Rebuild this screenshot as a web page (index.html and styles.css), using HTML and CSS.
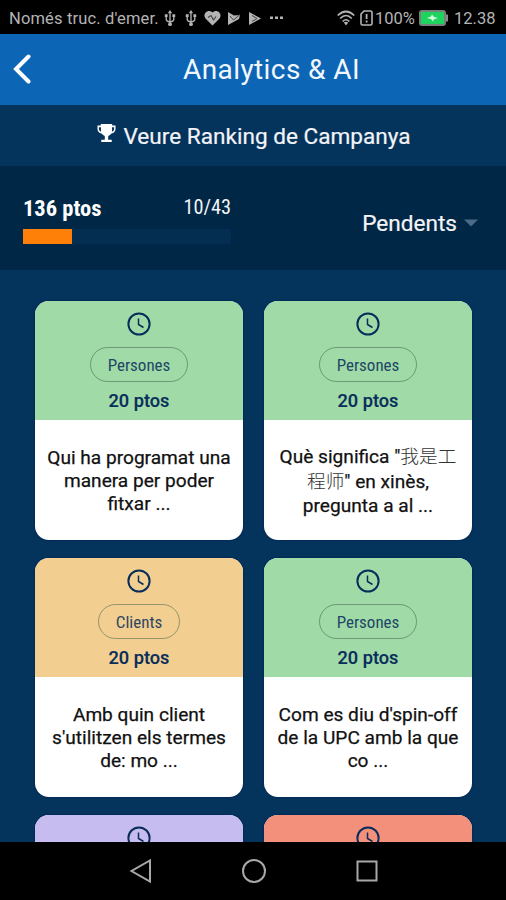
FILE: index.html
```html
<!DOCTYPE html>
<html lang="ca">
<head>
<meta charset="utf-8">
<title>Analytics &amp; AI</title>
<link rel="stylesheet" href="styles.css">
</head>
<body>
<svg class="defs" width="0" height="0">
  <symbol id="usb" viewBox="0 0 12 18"><path d="M6 2v13M2 6v4q0 2 4 2.500q4-.5 4-2.500V6" fill="none" stroke="currentColor" stroke-width="1.400"/><path d="M6 0l2.300 3.500H3.700z"/><circle cx="6" cy="15" r="2"/><path d="M.5 4.500h3v3h-3zM8.500 4.500h3v3h-3z"/></symbol>
  <symbol id="clock" viewBox="0 0 24 24"><circle cx="12" cy="12" r="10.600" fill="none" stroke="currentColor" stroke-width="2"/><path d="M11.500 6.500v6l5 3" fill="none" stroke="currentColor" stroke-width="1.500"/></symbol>
</svg>
<div class="screen">
  <header class="status">
    <span class="carrier">Només truc. d'emer.</span>
    <div class="notices">
      <svg width="12" height="17"><use href="#usb"/></svg>
      <svg width="12" height="17"><use href="#usb"/></svg>
      <svg width="17" height="16" viewBox="0 0 17 16"><path d="M8.500 15.500L1.500 8.500C-2 4 4-2 8.500 2.500C13-2 19 4 15.500 8.500z"/><path d="M4 7.500l3-2 2.500 4.500L12 6.500" fill="none" stroke="#444" stroke-width="1.200"/></svg>
      <svg width="14" height="15" viewBox="0 0 14 15"><path d="M1 1l6 3.500L13 4l-1 4L1 14z"/><path d="M3 5l3.500 4L13 3.500" fill="none" stroke="#444" stroke-width="1"/></svg>
      <svg width="14" height="15" viewBox="0 0 14 15"><path d="M1 1l12 6.500L1 14z"/><path d="M4 4.500l5 3L4 10.500" fill="none" stroke="#444"/></svg>
      <svg class="dots" width="14" height="4"><path d="M0 .5h3v2.500H0zM5 .5h3v2.500H5zM10 .5h3v2.500h-3z"/></svg>
    </div>
    <div class="system">
      <svg class="wifi" width="18" height="16" viewBox="0 0 18 16"><g fill="none" stroke="currentColor" stroke-width="1.700"><path d="M.7 5.500Q9-2.500 17.300 5.500M3.200 8.500Q9 2.500 14.800 8.500M5.700 11.500Q9 8 12.300 11.500"/></g><path d="M6.800 12.500Q9 10.800 11.200 12.500L9 15.500z"/></svg>
      <svg class="sim" width="13" height="16" viewBox="0 0 13 16"><path d="M4 1h6.500q1.500 0 1.500 1.500v11q0 1.500-1.500 1.500h-8Q1 15 1 13.500V4z" fill="none" stroke="currentColor" stroke-width="1.600"/><path d="M5.700 4h1.800v5H5.700zM5.700 10.500h1.800v2H5.700z"/></svg>
      <span class="percent">100%</span>
      <svg class="battery" width="29" height="16" viewBox="0 0 29 16"><rect x="1" y="1" width="25" height="14" rx="2" fill="#1ed45f" stroke="#77807a" stroke-width="2"/><path d="M27 4.500h2v7h-2z" fill="#8c8c8c"/><path d="M8 8l4-1.500 1-2 2 2.500 4 1-4 1.300-1 2.200-2-2.500z" fill="#d5ffe0"/></svg>
      <span class="time">12.38</span>
    </div>
  </header>
  <nav class="appbar">
    <svg class="back" width="18" height="30" viewBox="0 0 18 30"><path d="M15.500 2.500L3 15l12.500 12.500" fill="none" stroke="#fff" stroke-width="4" stroke-linecap="round"/></svg>
    <h1 class="title">Analytics &amp; AI</h1>
  </nav>
  <div class="ranking">
    <svg width="19" height="20" viewBox="0 0 20 20"><path d="M4 .5h12v1.700h3.500V6q-.3 3.500-4.300 4.600-1.400 2-3.400 2.600v3.800h3.700v2.500h-11V17h3.700v-3.800Q6.200 12.600 4.800 10.600.8 9.500.5 6V2.200H4zM2 4v2q.3 1.700 2.200 2.600V4zM18 4h-2.200v4.600Q17.700 7.700 18 6z" fill-rule="evenodd"/></svg>
    <span class="ranktext">Veure Ranking de Campanya</span>
  </div>
  <section class="summary">
    <div class="progress">
      <div class="labels"><b class="points">136 ptos</b><span class="count">10/43</span></div>
      <div class="bar"><div class="fill"></div></div>
    </div>
    <div class="filter"><span class="filtertext">Pendents</span><svg width="14" height="8"><path d="M0 .5h14L7 7.500z"/></svg></div>
  </section>
  <main class="cards">
    <article class="card"><div class="head green"><svg class="clock"><use href="#clock"/></svg><span class="tag"><span class="tagtext">Persones</span></span><strong class="pts">20 ptos</strong></div><p class="question">Qui ha programat una<br>manera per poder<br>fitxar ...</p></article>
    <article class="card"><div class="head green"><svg class="clock"><use href="#clock"/></svg><span class="tag"><span class="tagtext">Persones</span></span><strong class="pts">20 ptos</strong></div><p class="question mixed">Què significa "<span class="han">我是工</span><br><span class="han">程师</span>" en xinès,<br>pregunta a al ...</p></article>
    <article class="card"><div class="head sand"><svg class="clock"><use href="#clock"/></svg><span class="tag small"><span class="tagtext">Clients</span></span><strong class="pts">20 ptos</strong></div><p class="question">Amb quin client<br>s'utilitzen els termes<br>de: mo ...</p></article>
    <article class="card"><div class="head green"><svg class="clock"><use href="#clock"/></svg><span class="tag"><span class="tagtext">Persones</span></span><strong class="pts">20 ptos</strong></div><p class="question">Com es diu d'spin-off<br>de la UPC amb la que<br>co ...</p></article>
    <article class="card"><div class="head lilac"><svg class="clock"><use href="#clock"/></svg></div></article>
    <article class="card"><div class="head coral"><svg class="clock"><use href="#clock"/></svg></div></article>
  </main>
  <footer class="softkeys">
    <svg width="24" height="26" viewBox="0 0 24 26"><path d="M21 2.500v21L2.500 13z"/></svg>
    <svg width="26" height="26" viewBox="0 0 26 26"><circle cx="13" cy="13" r="11"/></svg>
    <svg width="24" height="24" viewBox="0 0 24 24"><path d="M2.500 2.500h19v19h-19z"/></svg>
  </footer>
</div>
</body>
</html>
```
FILE: styles.css
```css
* { box-sizing: border-box; }
body { margin: 0; background: #000; font-family: Roboto, "Noto Sans CJK SC", sans-serif; }
svg { display: block; flex: none; fill: currentColor; }
.defs { position: absolute; }
.screen { width: 506px; height: 900px; display: flex; flex-direction: column; overflow: hidden; background: #04335b; }
.screen > * { flex: none; }
span, b, strong { white-space: nowrap; }

.status { height: 34px; background: #000; color: #b4b4b4; display: flex; align-items: center; padding: 2px 10px 0 9px; font-size: 16.500px; }
.carrier { width: 151px; letter-spacing: .15px; }
.notices { display: flex; align-items: center; gap: 9px; margin-left: 4px; }
.notices svg:nth-child(3) { margin-left: -2px; }
.notices svg:nth-child(4) { margin-left: -3px; }
.notices svg:nth-child(5) { margin-left: -2px; }
.notices svg:nth-child(6) { margin-left: -1px; }
.system { display: flex; align-items: center; margin-left: auto; }
.sim { margin-left: 5px; }
.percent { margin-left: 2px; width: 41px; }
.battery { margin-left: 3px; }
.time { margin-left: 6px; width: 42px; }

.appbar { height: 71px; background: #0c65b5; display: flex; align-items: center; padding: 0 0 0 13px; }
.back { margin-bottom: 2px; }
.title { flex: 1; margin: 0; padding-left: 6px; text-align: center; color: #f2f7ff; font-size: 28px; font-weight: 400; letter-spacing: .4px; }
.ranking { height: 61px; background: #04335b; color: #f3f3f8; display: flex; align-items: center; justify-content: center; gap: 7px; font-size: 22.600px; padding: 1px 0 0 2px; -webkit-text-stroke: .2px #f3f3f8; }
.ranking svg { margin-bottom: 7px; color: #fff; }
.summary { height: 104px; background: #002745; display: flex; justify-content: space-between; padding: 0 28px 0 23px; color: #f4f4f8; }
.progress { width: 208px; padding-top: 28px; }
.labels { display: flex; justify-content: space-between; height: 35px; }
.points { font-size: 22.500px; line-height: 28px; font-stretch: 75%; color: #fff; }
.count { font-size: 20.300px; line-height: 26px; font-stretch: 75%; }
.bar { height: 15px; background: #042e51; }
.fill { width: 49px; height: 15px; background: #ff8008; }
.filter { display: flex; align-items: center; gap: 7px; font-size: 22.600px; padding-top: 10px; -webkit-text-stroke: .2px #f4f4f8; }
.filter svg { color: #4c6b89; }

.cards { height: 572px; overflow: hidden; padding: 31px 34px 0 35px; display: grid; grid-template-columns: 208px 208px; column-gap: 21px; grid-auto-rows: 239px; row-gap: 18px; }
.card { background: #fff; border-radius: 14px; overflow: hidden; box-shadow: 0 0 2px #001c51; }
.head { height: 119px; display: flex; flex-direction: column; align-items: center; padding-top: 11px; color: #082d5b; }
.green { background: #a0daa6; }
.sand { background: #f2cf90; }
.lilac { background: #c6bcef; }
.coral { background: #f3907c; }
.clock { width: 24px; height: 24px; }
.tag { width: 98px; height: 35px; margin-top: 11px; border: 1px solid rgba(60, 95, 75, .6); border-radius: 18px; display: flex; align-items: center; justify-content: center; font-size: 17px; font-stretch: 75%; opacity: .85; }
.small { width: 82px; }
.pts { margin-top: 7px; font-size: 18.200px; line-height: 24px; font-weight: 500; -webkit-text-stroke: .15px #082d5b; }
.question { margin: 27px 0 0; text-align: center; color: #111; font-size: 19.100px; line-height: 22.800px; -webkit-text-stroke: .25px #111; }
.mixed { line-height: 24.500px; margin-top: 25px; }
.han { font-family: "Noto Sans CJK SC", sans-serif; font-size: 18.700px; font-weight: 300; line-height: 1; color: #333; -webkit-text-stroke: 0; }

.softkeys { height: 58px; background: #000; display: flex; align-items: center; padding-left: 129px; gap: 88px; }
.softkeys svg { fill: none; stroke: #a8a8a8; stroke-width: 2; }
```
